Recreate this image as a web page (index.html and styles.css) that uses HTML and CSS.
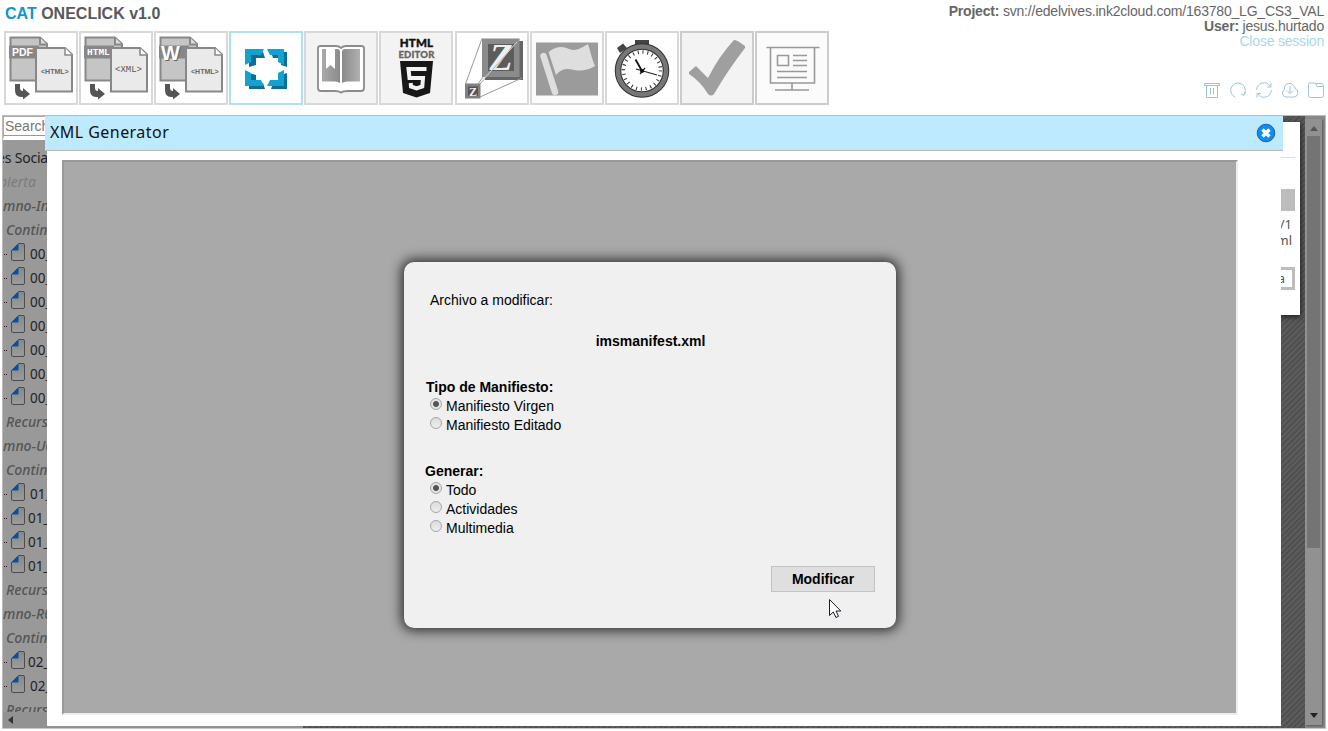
FILE: index.html
```html
<!DOCTYPE html>
<html lang="es">
<head>
<meta charset="utf-8">
<title>CAT ONECLICK v1.0</title>
<link rel="stylesheet" href="styles.css">
</head>
<body>
<svg class="defs" width="0" height="0">
  <defs>
    <linearGradient id="bookFill"><stop offset="0" stop-color="#aaa"/><stop offset=".5" stop-color="#888"/><stop offset="1" stop-color="#b0b0b0"/></linearGradient>
    <linearGradient id="pageFill" x2="0" y2="1"><stop offset="0" stop-color="#888"/><stop offset="1" stop-color="#9c9c9c"/></linearGradient>
    <g id="docs">
      <path d="M6.5 6.5H36L43 13V49.500H6.500Z" fill="#c5c5c5" stroke="#888" stroke-width="2"/>
      <path d="M36 6.500V13.500H43" fill="#ddd" stroke="#888" stroke-width="2"/>
      <rect x="5" y="14.500" width="30" height="13" fill="#888"/>
      <path d="M32 17H61L68 23.500V60.500H32Z" fill="#eaeaea" stroke="#888" stroke-width="2"/>
      <path d="M61 17V24H68" fill="#fff" stroke="#888" stroke-width="1.500"/>
      <path d="M11 53H16V57Q16 60 19 60V57L26 63L19 68.500V66H17Q11 66 11 59Z" fill="#555"/>
    </g>
    <g id="file">
      <path d="M7.500 .5H12Q13.500 .5 13.500 2V16Q13.500 17.500 12 17.500H2Q.5 17.500 .5 16V7.500Z" fill="url(#pageFill)" stroke="#4c4c4c"/>
      <path d="M7.500 .5V7.500H.5Z" fill="#07539b"/>
    </g>
  </defs>
</svg>

<header class="header">
  <div class="brand">
    <h1 class="title"><span class="accent">CAT</span> ONECLICK v1.0</h1>
    <nav class="toolbar">
      <button class="tool"><svg viewBox="2 2 70 70"><use href="#docs"/><text x="8" y="25" class="t-pdf">PDF</text><text x="37" y="43" class="t-tag">&lt;HTML&gt;</text></svg></button>
      <button class="tool"><svg viewBox="2 2 70 70"><use href="#docs"/><text x="8" y="23.500" class="t-html">HTML</text><text x="36" y="41" class="t-xml">&lt;XML&gt;</text></svg></button>
      <button class="tool"><svg viewBox="2 2 70 70"><use href="#docs"/><text x="8" y="29.500" class="t-word-shade">W</text><text x="7" y="28.500" class="t-word">W</text><text x="37" y="43" class="t-tag">&lt;HTML&gt;</text></svg></button>
      <button class="tool tool-active"><svg viewBox="2 2 70 70">
        <path d="M20 21H34L36 27H27V34L20 36ZM42 21H58V36L52 34V27H44ZM20 42L27 44V52H34L36 58H20ZM52 44L58 42V58H42L44 52H52Z" fill="#086f98"/>
        <path d="M16 18H35L32 24H22V31L16 34ZM38 18H55V34L49 31V24H41ZM16 39L22 42V49H32L35 55H16ZM49 42L55 39V55H38L41 49H49Z" fill="#15a1d0"/>
      </svg></button>
      <button class="tool tool-tint"><svg viewBox="2 2 70 70">
        <path d="M14 17Q14 15 17 15H32Q35 15 37 17Q39 15 42 15H57Q60 15 60 17V57Q60 60 57 60H44Q39 60 37 61.500Q35 60 31 60H17Q14 60 14 57Z" fill="#fff" stroke="#8c8c8c" stroke-width="1.800"/>
        <path d="M18 18H33Q36 18 36 21V52Q34 50.500 31 50.500H18ZM38 21Q38 18 41 18H56V50.500H43Q40 50.500 38 52Z" fill="url(#bookFill)"/>
        <path d="M22 16H31V38L26.500 34L22 38Z" fill="#fff"/>
        <path d="M37 18V55" stroke="#fff" stroke-width="2"/>
      </svg></button>
      <button class="tool tool-tint"><svg viewBox="2 2 70 70">
        <text x="37.500" y="16.300" class="t-ed1">HTML</text><text x="37.500" y="26.800" class="t-ed2">EDITOR</text>
        <path d="M21 30H54L51 62L37.500 66.500L24 62Z" fill="#171717"/>
        <path d="M47.500 38H29.500L30.500 47H44L43.300 55.500L37.500 57.300L32 55.500L31.700 52" fill="none" stroke="#f3f3f3" stroke-width="4"/>
      </svg></button>
      <button class="tool"><svg viewBox="2 2 70 70">
        <path d="M30 10H68V49H30Z" fill="#666"/><path d="M27 7.500H64.500V46H27Z" fill="#8b8b8b"/>
        <path d="M33 13H59V40H33Z" fill="#5c5c5c"/><text x="46" y="39" class="t-z">Z</text>
        <rect x="10" y="52.500" width="15.500" height="15" fill="#808080"/><rect x="13" y="55.500" width="10" height="9.500" fill="#555"/><text x="18" y="64.500" class="t-z2">Z</text>
        <path d="M10.500 53L27 7.500M25 53L64.500 8M25 66L67 47M22 54L29 45" fill="none" stroke="#999" stroke-width="1"/>
        <path d="M27 50L62 11" stroke="#ddd" stroke-width=".8"/>
      </svg></button>
      <button class="tool tool-light"><svg viewBox="2 2 70 70">
        <rect x="6" y="11.500" width="62" height="53" fill="#9b9b9b"/>
        <path d="M13.500 25L25 61" stroke="#dedede" stroke-width="6.500" stroke-linecap="round"/>
        <path d="M18.500 21C26 15 33 15 39 18C47 21 52 16 58 13C61 22 62 29 65 35C57 40 50 40 44 39C36 37 31 38 26 44Z" fill="#dedede"/>
      </svg></button>
      <button class="tool"><svg viewBox="2 2 70 70">
        <rect x="30" y="9" width="14" height="6" fill="#444"/><path d="M12 17L18 12.500L22 17L15 22Z" fill="#444"/>
        <circle cx="37" cy="39.500" r="24" fill="#fff" stroke="#303030" stroke-width="6.500"/>
        <circle cx="37" cy="39.500" r="24" fill="none" stroke="#777" stroke-width="4.500"/>
        <circle cx="37" cy="39.500" r="18.500" fill="none" stroke="#333" stroke-width="3.500" stroke-dasharray="1 3.840"/>
        <path d="M37 40L30.500 28.500" stroke="#111" stroke-width="1.800"/><path d="M31 38L52 44M35 43L40 37" stroke="#222" stroke-width="1.200"/><circle cx="37" cy="40" r="2" fill="#111"/>
      </svg></button>
      <button class="tool tool-tint tool-dark"><svg viewBox="2 2 70 70"><path d="M9 41L16 35L28 47Q39 25 54 9Q56 8 65 15V17Q48 39 34 63Q31 66 28 63Q21 51 9 43Z" fill="#9f9f9f"/></svg></button>
      <button class="tool tool-light tool-dark"><svg viewBox="2 2 70 70"><path d="M11.500 16.500H64.500M15.500 16V52H59.500V16M37 52V59M20 59H54M22.500 24.500H33.500V34.500H22.500ZM38 24.500H52M38 29.500H52M38 34.500H52M22 40.500H52M22 46.500H52" fill="none" stroke="#999" stroke-width="1.600"/></svg></button>
    </nav>
  </div>
  <div class="session">
    <div><b>Project:</b> svn://edelvives.ink2cloud.com/163780_LG_CS3_VAL</div>
    <div><b>User:</b> jesus.hurtado</div>
    <a class="logout">Close session</a>
    <div class="actions">
      <svg viewBox="0 0 16 16"><path d="M.5 1.500H15.500V3.500H.5ZM2.500 3.500V15.500H13.500V3.500M6.500 6V12.500M9.500 6V12.500"/></svg>
      <svg viewBox="0 0 16 16"><path d="M5 15A7.300 7.300 0 1 1 14 12.500M11 12L14 13.500L15.500 10.500"/></svg>
      <svg viewBox="0 0 16 16"><path d="M.7 8A7.300 7.300 0 0 1 14 4M15 1V5H11M15.300 8A7.300 7.300 0 0 1 2 12M1 15.500V11.500H5"/></svg>
      <svg viewBox="0 0 16 16"><path d="M4 15A4 4 0 0 1 2.500 7.500V5A5 5 0 0 1 11.500 3.500Q13 4.500 13 6.500A4.400 4.400 0 0 1 12 15ZM8 4.500V11M5 8.500L8 11.500L11 8.500"/></svg>
      <svg viewBox="0 0 16 16"><path d="M.5 2.500V13.500Q.5 15.500 2.500 15.500H13.500Q15.500 15.500 15.500 13.500V4.500H9L7.500 1H2Q.5 1 .5 2.500ZM8 1.500H14Q15.500 1.500 15.500 4.500"/></svg>
    </div>
  </div>
</header>

<main class="workspace">
  <aside class="sidebar">
    <div class="search">Search</div>
    <ul class="tree">
      <li class="root">es Sociales</li>
      <li class="open">bierta</li>
      <li class="group">mno-Inicio</li>
      <li class="section">Contin</li>
      <li class="leaf"><svg><use href="#file"/></svg>00_</li>
      <li class="leaf"><svg><use href="#file"/></svg>00_</li>
      <li class="leaf"><svg><use href="#file"/></svg>00_</li>
      <li class="leaf"><svg><use href="#file"/></svg>00_</li>
      <li class="leaf"><svg><use href="#file"/></svg>00_</li>
      <li class="leaf"><svg><use href="#file"/></svg>00_</li>
      <li class="leaf"><svg><use href="#file"/></svg>00_</li>
      <li class="section">Recurs</li>
      <li class="group">mno-U01</li>
      <li class="section">Contin</li>
      <li class="leaf"><svg><use href="#file"/></svg>01_</li>
      <li class="leaf tight"><svg><use href="#file"/></svg>01_</li>
      <li class="leaf tight"><svg><use href="#file"/></svg>01_</li>
      <li class="leaf tight"><svg><use href="#file"/></svg>01_</li>
      <li class="section">Recurs</li>
      <li class="group">mno-R01</li>
      <li class="section">Contin</li>
      <li class="leaf tight"><svg><use href="#file"/></svg>02_</li>
      <li class="leaf"><svg><use href="#file"/></svg>02_</li>
      <li class="section">Recurs</li>
    </ul>
    <div class="hscroll"><svg width="5" height="8"><path d="M5 0V8L0 4Z" fill="#333"/></svg></div>
  </aside>
  <div class="canvas">
    <div class="panel">
      <hr class="rule">
      <div class="bar"></div>
      <div class="info"><div>/1</div><div>ml</div></div>
      <div class="field">a</div>
    </div>
  </div>
  <div class="vscroll">
    <svg width="8" height="5"><path d="M0 5H8L4 0Z" fill="#555"/></svg>
    <div class="thumb"></div>
    <svg class="down" width="8" height="5"><path d="M0 0H8L4 5Z" fill="#222"/></svg>
  </div>

  <section class="modal">
    <div class="modal-head">
      <h2>XML Generator</h2>
      <svg class="close" width="20" height="20"><circle cx="10" cy="10" r="8.800" fill="#0b8df5" stroke="#226399" stroke-width="1"/><path d="M6.500 6.500L13.500 13.500M13.500 6.500L6.500 13.500" stroke="#fff" stroke-width="3.400"/></svg>
    </div>
    <div class="modal-body">
      <div class="frame">
        <form class="dialog">
          <p class="lead">Archivo a modificar:</p>
          <p class="filename">imsmanifest.xml</p>
          <div class="options kind">
            <b>Tipo de Manifiesto:</b>
            <label><i class="radio on"></i>Manifiesto Virgen</label>
            <label><i class="radio"></i>Manifiesto Editado</label>
          </div>
          <div class="options scope">
            <b>Generar:</b>
            <label><i class="radio on"></i>Todo</label>
            <label><i class="radio"></i>Actividades</label>
            <label><i class="radio"></i>Multimedia</label>
          </div>
          <button type="button" class="submit">Modificar</button>
        </form>
      </div>
    </div>
  </section>
</main>
<svg class="cursor" width="13" height="20"><path d="M.5 .5V16.500L4.300 13L7 18.500L9.500 17.300L7 12H11.800Z" fill="#fff" stroke="#1c1c28"/></svg>
</body>
</html>
```
FILE: styles.css
```css
* { box-sizing: border-box; }
body { margin: 0; width: 1328px; height: 731px; overflow: hidden; background: #fff; font-family: "Liberation Sans", Arial, sans-serif; display: flex; flex-direction: column; }
h1, h2, p, ul { margin: 0; padding: 0; }
.defs { position: absolute; }

.header { height: 115px; flex: none; display: flex; justify-content: space-between; padding: 4px 4px 0; }
.title { height: 27px; padding-left: 1px; font-size: 16px; line-height: 19px; color: #58595b; }
.accent { color: #0f96cf; }
.toolbar { display: flex; gap: 1.100px; }
.tool { width: 74px; height: 74px; padding: 0; border: 2px solid #d8d8d8; background: #fff; }
.tool svg { display: block; width: 70px; height: 70px; }
.tool-active { border-color: #aee0ef; }
.tool-tint { background: #f3f3f3; }
.tool-light { background: #fbfbfb; }
.tool-dark { border-color: #ccc; }
.t-pdf { font: bold 10.500px "Liberation Sans", sans-serif; fill: #fff; }
.t-tag { font: bold 7px "Liberation Sans", sans-serif; fill: #666; }
.t-html { font: bold 9.500px "Liberation Mono", monospace; fill: #fff; }
.t-xml { font: 9px "Liberation Mono", monospace; fill: #555; }
.t-word { font: bold 20px "Liberation Sans", sans-serif; fill: #fff; }
.t-word-shade { font: bold 20px "Liberation Sans", sans-serif; fill: #666; }
.t-ed1 { font: 900 11.500px Lato, sans-serif; letter-spacing: .2px; text-anchor: middle; fill: #111; stroke: #111; stroke-width: .4px; }
.t-ed2 { font: 900 9.500px Lato, sans-serif; letter-spacing: .2px; text-anchor: middle; fill: #666; stroke: #666; stroke-width: .3px; }
.t-z { font: italic bold 38px "Liberation Serif", serif; text-anchor: middle; fill: #eee; }
.t-z2 { font: bold 12px "Liberation Serif", serif; text-anchor: middle; fill: #eee; }

.session { font-size: 14px; line-height: 15px; letter-spacing: -.2px; text-align: right; color: #666; display: flex; flex-direction: column; align-items: flex-end; }
.logout { color: #a9d8ea; }
.actions { display: flex; gap: 10px; margin-top: 33px; }
.actions svg { width: 16px; height: 16px; fill: none; stroke: #9fc3dc; stroke-width: 1; }

.workspace { position: relative; display: flex; width: 1324px; height: 614px; margin-left: 2px; border: 1px solid #bbb; border-bottom-color: #c6c6c6; background: #888a8c; overflow: hidden; }
.sidebar { width: 300px; flex: none; display: flex; flex-direction: column; color: #222; font: 14px/24px "Noto Sans", sans-serif; background: #999; }
.search { height: 24px; background: #fff; border: solid #aaa; border-width: 1px 0 0 1px; border-bottom: 4px solid #fff; box-shadow: inset 0 -1px #999; padding-left: 1px; font: 14px/19px "Liberation Sans", sans-serif; color: #777; }
.tree { height: 572px; padding-top: 6px; overflow: hidden; list-style: none; }
.tree li { height: 24px; white-space: nowrap; overflow: hidden; }
.root { text-indent: -6px; letter-spacing: -.2px; }
.open { text-indent: -4px; color: #7b7b7b; font-style: italic; }
.group { color: #555; font-style: italic; font-weight: 500; }
.section { padding-left: 3px; color: #555; font-style: italic; font-weight: 500; }
.leaf { display: flex; gap: 5px; font-size: 13.500px; }
.leaf::before { content: ""; width: 3px; margin: 12px 0 0 1px; border-top: 1px dotted #222; }
.leaf svg { width: 14px; height: 18px; margin-left: -1px; margin-top: 1px; flex: none; }
.tight svg { margin-right: -2px; }
.hscroll { flex: 1; background: #929292; padding: 4px 5px; line-height: 0; }

.canvas { flex: 1; display: flex; align-items: flex-start; justify-content: flex-end; padding: 6px 5px 0 0; background: repeating-linear-gradient(135deg, #505050 0 2px, #5c5c5c 2px 4px); }
.panel { width: 360px; height: 193px; padding: 35px 5px 0; background: #fff; box-shadow: 1px 2px 5px #222; text-align: right; color: #555; font: 13px/16px "Noto Sans", sans-serif; }
.rule { margin: 0; border: 0; height: 1px; background: #ddd; }
.bar { height: 22px; margin-top: 31px; background: #bdbdbd; }
.info { margin-top: 5px; padding-right: 3px; }
.field { height: 23px; margin-top: 19px; border: 3px solid #bdbdbd; padding-right: 7px; }
.vscroll { width: 17px; flex: none; margin-top: 3px; margin-bottom: 3px; margin-right: 3px; background: #919191; display: flex; flex-direction: column; align-items: center; padding: 7px 0; box-shadow: 1px 1px 2px #555; }
.thumb { width: 13px; height: 412px; margin-top: 5px; background: #747474; }
.down { margin-top: auto; }

.modal { position: absolute; left: 42px; top: 0; width: 1238px; height: 610px; }
.modal-head { height: 35px; background: #bdeaff; border-bottom: 1px solid #b9b9b9; display: flex; justify-content: space-between; align-items: center; padding: 0 7px 0 5px; }
.modal-head h2 { margin-top: -2px; font: 16px/32px "Noto Sans", sans-serif; letter-spacing: .45px; color: #111; }
.modal-body { height: 575px; margin: 0 2px; padding: 9px 43px 11px 15px; background: #fff; }
.frame { height: 555px; border: 2px solid; border-color: #999 #eee #eee #999; background: #a9a9a9; display: flex; justify-content: center; align-items: flex-start; padding-top: 100px; }
.dialog { width: 492px; height: 366px; border-radius: 10px; background: #f0f0f0; box-shadow: 0 0 12px 3px #333; padding: 29px 21px 0 22px; font-size: 14px; line-height: 19px; color: #000; display: flex; flex-direction: column; }
.lead { padding-left: 4px; }
.filename { margin-top: 22px; text-align: center; font-weight: bold; }
.options { display: flex; flex-direction: column; }
.kind { margin-top: 27px; }
.scope { margin-top: 27px; }
.scope b { margin-left: -1px; }
.options label { display: flex; gap: 4px; padding-left: 4px; }
.radio { width: 12px; height: 12px; margin-top: 1px; border: 1px solid #a5a5a5; border-radius: 50%; background: linear-gradient(#ddd, #eee); }
.radio.on { background: radial-gradient(circle, #555 0 2.500px, #e4e4e4 3.500px); }
.submit { align-self: flex-end; width: 104px; height: 26px; margin-top: 28px; padding: 0; border: 1px solid #c3c3c3; background: #dfdfdf; font: bold 14px "Liberation Sans", sans-serif; color: #000; }
.cursor { position: absolute; left: 829px; top: 599px; }
```
